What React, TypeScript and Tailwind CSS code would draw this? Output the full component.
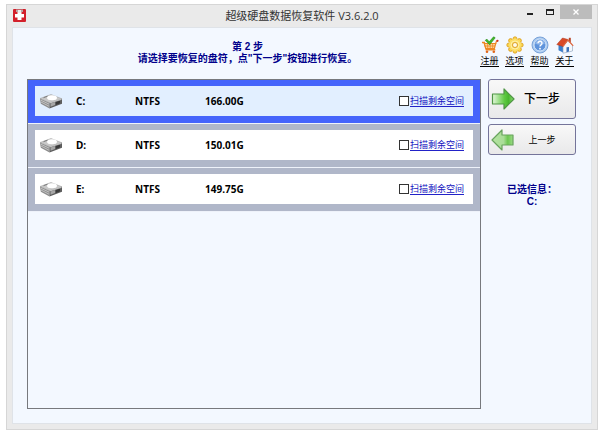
import { useState } from "react";
import type { ReactNode } from "react";

const drives = [
  { name: "C:", fs: "NTFS", size: "166.00G" },
  { name: "D:", fs: "NTFS", size: "150.01G" },
  { name: "E:", fs: "NTFS", size: "149.75G" },
];

function AppIcon() {
  return (
    <svg viewBox="0 0 13 13" className="size-[13px]" aria-hidden="true">
      <rect width="13" height="13" rx="1" fill="#d3202b" />
      <path d="M4.500 3h4v2H11v3.500H8.500V11h-4V8.500H2V5h2.500z" fill="#fff" />
      <path d="M3 .5h7v2.500H3z" fill="#b9a5a5" />
      <path d="M5 1h3v3H5z" fill="#f1eeee" />
    </svg>
  );
}

function CartIcon() {
  return (
    <svg viewBox="0 0 18 18" className="size-[18px]" aria-hidden="true">
      <path d="M1 6.5h2.3l2 7.2h9" fill="none" stroke="#ee8722" strokeWidth="1.5" />
      <path d="M3.3 7.5h11.4l-1.3 5H4.8z" fill="#fbd9a0" stroke="#ee8722" strokeWidth="1.2" />
      <path d="M6.7 8v4M9.2 8v4M11.7 8v4M4 10h10" stroke="#ee8722" strokeWidth=".8" />
      <path d="M14.5 8l1-3h1" fill="none" stroke="#ee8722" strokeWidth="1.2" />
      <circle cx="16.5" cy="4.8" r="1.1" fill="#d0301c" />
      <circle cx="6" cy="15.8" r="1.3" fill="#e0661b" />
      <circle cx="12.8" cy="15.8" r="1.3" fill="#e0661b" />
      <path d="M4.200 4.300L6 3.200l2.200 2.600L12.600.8l1.600 1-5.600 7z" fill="#3fb827" stroke="#248815" strokeWidth=".6" />
    </svg>
  );
}

function GearIcon() {
  return (
    <svg viewBox="0 0 18 18" className="size-[18px]" aria-hidden="true">
      <g fill="#f9d44d" stroke="#d99a1c" strokeWidth=".8">
        <circle cx="9" cy="2.8" r="2" />
        <circle cx="13.4" cy="4.6" r="2" />
        <circle cx="15.2" cy="9" r="2" />
        <circle cx="13.4" cy="13.4" r="2" />
        <circle cx="9" cy="15.2" r="2" />
        <circle cx="4.6" cy="13.4" r="2" />
        <circle cx="2.8" cy="9" r="2" />
        <circle cx="4.6" cy="4.6" r="2" />
      </g>
      <circle cx="9" cy="9" r="6.2" fill="#fbdf68" />
      <circle cx="9" cy="9" r="4" fill="none" stroke="#fff0a8" strokeWidth="1" />
      <circle cx="9" cy="9" r="2.5" fill="#fffbe8" stroke="#d99a1c" strokeWidth=".9" />
    </svg>
  );
}

function HelpIcon() {
  return (
    <svg viewBox="0 0 18 18" className="size-[18px]" aria-hidden="true">
      <circle cx="9" cy="9" r="8" fill="#a9c9ef" stroke="#6f9bd5" strokeWidth=".9" />
      <circle cx="9" cy="9" r="6" fill="#5f94dc" stroke="#dcebfb" strokeWidth=".9" />
      <path d="M4 7.5a5.2 5.2 0 0 1 10 0q-5 2.500-10 0z" fill="#8db5ea" />
      <path d="M7 7.300a2 2 0 1 1 3.100 1.600q-1.100.7-1.100 1.600" fill="none" stroke="#fff" strokeWidth="1.400" />
      <circle cx="9" cy="12.700" r=".9" fill="#fff" />
    </svg>
  );
}

function HomeIcon() {
  return (
    <svg viewBox="0 0 18 18" className="size-[18px]" aria-hidden="true">
      <path d="M2.500 8.500l5 1.500v6.800l-5-2.600z" fill="#3c7ecb" />
      <path d="M7 10l5-5.500 4.500 5V15L7 17.200z" fill="#f4f7fc" stroke="#8aa0bb" strokeWidth=".6" />
      <path d="M12.800 1.800h2v4.500h-2z" fill="#b84426" />
      <path d="M.8 8.500L6.500 2l5.500 1.500L7 10.500z" fill="#d94a28" stroke="#a93519" strokeWidth=".5" />
      <path d="M7 10.300l5-6.300 5.200 5.900" fill="none" stroke="#e2683f" strokeWidth="1.200" />
      <path d="M10.500 11.300l2.500-.4v4.700l-2.500.6z" fill="#3b72b8" />
    </svg>
  );
}

function DriveIcon() {
  return (
    <svg viewBox="0 0 22 15" className="h-[15px] w-[22px]" aria-hidden="true">
      <path d="M0 4.500L9.500 8.500V14.500L.8 9.800z" fill="#8d8d8d" />
      <path d="M9.500 8.500L22 4.800v5L9.500 14.600z" fill="#5d5d5d" />
      <path d="M0 4.500L11 .5l11 4.300-12.500 3.900z" fill="#c9c9c9" stroke="#9b9b9b" strokeWidth=".5" />
      <ellipse cx="12" cy="3.800" rx="5" ry="2.500" fill="#fff" />
      <path d="M3.500 3.700l4-1.500" stroke="#7d7d7d" strokeWidth="1" />
      <path d="M1 6.300l8 3.800M1 8l8 4.200" stroke="#cfcfcf" strokeWidth=".8" />
      <path d="M10.500 9.500l4.500-1.400v3l-4.500 1.700z" fill="#a6a6a6" />
      <path d="M16 8l4-1.300v2.600L16 11z" fill="#393939" />
      <path d="M10 8.900L21.500 5.400" stroke="#e4e4e4" strokeWidth=".7" />
    </svg>
  );
}

function Arrow({ back = false }: { back?: boolean }) {
  const shape = back
    ? "M1 11L11 1v5h11v10H11v5z"
    : "M23 11L13 1v5H1.500v10H13v5z";
  return (
    <svg viewBox="0 0 24 22" className="h-[22px] w-6 shrink-0" aria-hidden="true">
      <defs>
        <linearGradient id={back ? "fadeBack" : "fadeNext"}>
          <stop offset="0" stopColor={back ? "#b5e3a1" : "#e4f7dc"} />
          <stop offset=".55" stopColor={back ? "#a9dd97" : "#5fca43"} />
          <stop offset=".75" stopColor={back ? "#6cc650" : "#47b72d"} />
          <stop offset="1" stopColor={back ? "#9cdb88" : "#93dc7b"} />
        </linearGradient>
      </defs>
      <path
        d={shape}
        fill={back ? "url(#fadeBack)" : "url(#fadeNext)"}
        stroke={back ? "#68a35d" : "#4f9545"}
        strokeWidth="1.200"
        strokeLinejoin="round"
      />
    </svg>
  );
}

function ToolLink({ icon, children }: { icon: ReactNode; children: ReactNode }) {
  return (
    <a href="#" className="flex w-[19px] flex-col items-center gap-px text-black">
      {icon}
      <span className="border-b border-black text-[9px] leading-[11px] whitespace-nowrap">{children}</span>
    </a>
  );
}

export default function App() {
  const [selected, setSelected] = useState("C:");

  return (
    <div className="flex min-h-screen bg-white pt-1 pr-0.5 pb-[3px] pl-1.5 font-['Noto_Sans','Noto_Sans_CJK_SC',sans-serif] text-[10px] leading-3 text-black">
      <div className="flex flex-1 flex-col border border-[#d6d6d6] bg-[#eaeaea] px-[5px] pb-[5px]">
        <header className="grid h-[22px] shrink-0 grid-cols-[1fr_auto_1fr] items-start">
          <div className="pt-1 pl-px">
            <AppIcon />
          </div>
          <h1 className="pt-[3px] font-['Open_Sans','Noto_Sans_CJK_SC',sans-serif] text-[11px] leading-4 text-[#333]">
            超级硬盘数据恢复软件 V3.6.2.0
          </h1>
          <div className="flex justify-end">
            <button aria-label="最小化" className="flex h-[14px] w-5 items-center justify-center">
              <span className="mt-1 h-0.5 w-1.5 bg-[#222]" />
            </button>
            <button aria-label="最大化" className="flex h-[14px] w-5 items-center justify-center">
              <span className="h-1.5 w-2 border border-t-2 border-[#222]" />
            </button>
            <button aria-label="关闭" className="flex h-[14px] w-8 items-center justify-center bg-[#bcbcbc]">
              <svg viewBox="0 0 6 6" className="size-1.5" aria-hidden="true">
                <path d="M.5.5l5 5M5.500.5l-5 5" stroke="#fff" strokeWidth="1.300" />
              </svg>
            </button>
          </div>
        </header>

        <main className="flex flex-1 flex-col border border-[#dfe3e8] bg-[#f3f8ff] pr-[15px] pb-3.5 pl-3.5">
          <div className="flex h-[51px] shrink-0 items-start">
            <div className="flex-1 pt-[13px] pr-3 text-center font-['Liberation_Sans','Noto_Sans_CJK_SC',sans-serif] font-bold text-[#00008b]">
              <h2>第 2 步</h2>
              <p>请选择要恢复的盘符，点"下一步"按钮进行恢复。</p>
            </div>
            <nav className="flex gap-1.5 pt-2 pr-0.5">
              <ToolLink icon={<CartIcon />}>注册</ToolLink>
              <ToolLink icon={<GearIcon />}>选项</ToolLink>
              <ToolLink icon={<HelpIcon />}>帮助</ToolLink>
              <ToolLink icon={<HomeIcon />}>关于</ToolLink>
            </nav>
          </div>

          <div className="flex flex-1 gap-[7px]">
            <section className="flex-1 border border-[#77797d]">
              <table className="w-full table-fixed border-separate border-spacing-0 text-left">
                <colgroup>
                  <col className="w-12" />
                  <col className="w-[59px]" />
                  <col className="w-[70px]" />
                  <col />
                  <col className="w-[81px]" />
                </colgroup>
                <tbody>
                  {drives.map((drive) => {
                    const active = drive.name === selected;
                    const frame = `border-b border-[#eef2fa] pt-1.5 pb-[7px] ${active ? "bg-[#4564fb]" : "bg-[#b0b7c9]"}`;
                    const fill = `flex h-[30px] items-center ${active ? "bg-[#e2efff]" : "bg-white"}`;
                    return (
                      <tr key={drive.name} onClick={() => setSelected(drive.name)}>
                        <td className={`${frame} pl-[7px]`}>
                          <div className={`${fill} pl-[5px]`}>
                            <DriveIcon />
                          </div>
                        </td>
                        <th scope="row" className={frame}>
                          <div className={fill}>{drive.name}</div>
                        </th>
                        <td className={`${frame} font-bold`}>
                          <div className={fill}>{drive.fs}</div>
                        </td>
                        <td className={`${frame} font-bold`}>
                          <div className={fill}>{drive.size}</div>
                        </td>
                        <td className={`${frame} pr-[7px]`}>
                          <div className={fill}>
                            <label className="flex items-center gap-px whitespace-nowrap">
                              <input
                                type="checkbox"
                                className="size-2.5 appearance-none border border-[#333] bg-white checked:bg-[#4564fb]"
                              />
                              <span className="border-b border-[#2222c8] text-[9px] leading-[10px] text-[#1111c0]">
                                扫描剩余空间
                              </span>
                            </label>
                          </div>
                        </td>
                      </tr>
                    );
                  })}
                </tbody>
              </table>
            </section>

            <aside className="flex w-[88px] flex-col gap-[5px]">
              <button className="flex h-10 items-center rounded-[3px] border border-[#74749a] bg-linear-to-b from-[#f8f8f8] to-[#e9e9ea] pl-0.5">
                <Arrow />
                <span className="flex-1 pr-1.5 text-[12px] leading-4 font-medium">下一步</span>
              </button>
              <button className="flex h-[31px] items-center rounded-[3px] border border-[#74749a] bg-linear-to-b from-[#f8f8f8] to-[#e9e9ea] pl-0.5">
                <Arrow back />
                <span className="flex-1 pr-1.5 text-[9px] leading-3">上一步</span>
              </button>
              <div className="pt-6 text-center font-['Liberation_Sans','Noto_Sans_CJK_SC',sans-serif] font-bold text-[#00008b]">
                <p>已选信息：</p>
                <p>{selected}</p>
              </div>
            </aside>
          </div>
        </main>
      </div>
    </div>
  );
}
